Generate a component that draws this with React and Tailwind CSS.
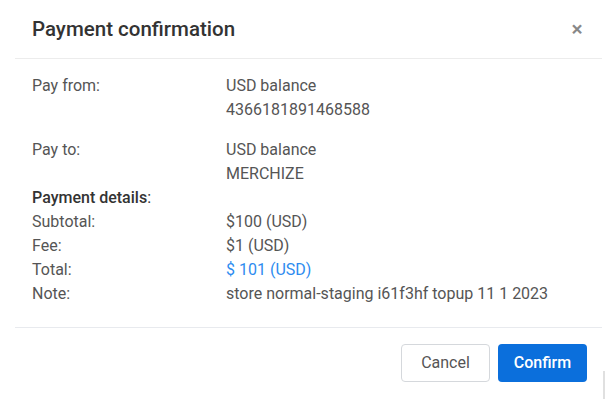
import React from "react";

const Row = ({ label, children }) => (
  <div className="flex">
    <div className="w-[194px] shrink-0">{label}</div>
    <div>{children}</div>
  </div>
);

const App = () => {
  return (
    <div
      className="w-[606px] h-[399px] bg-white text-[#555] relative overflow-hidden"
      style={{ fontFamily: "Roboto, 'Liberation Sans', sans-serif" }}
    >
      <div className="flex items-center justify-between h-[58px] pl-[32px] pr-[22px]">
        <h2 className="text-[20.5px] font-medium text-[#333]">Payment confirmation</h2>
        <button className="text-[#888] text-[21px] leading-none font-medium w-[14px] flex justify-center">×</button>
      </div>
      <div className="ml-[15px] w-[587px] h-px bg-[#ececec]" />

      <div className="pl-[32px] pt-[15px] text-[16px] leading-[24px]">
        <Row label="Pay from:">
          <div>USD balance</div>
          <div>4366181891468588</div>
        </Row>
        <div className="h-[16px]" />
        <Row label="Pay to:">
          <div>USD balance</div>
          <div>MERCHIZE</div>
        </Row>
        <div className="font-medium text-[#333]">
          Payment details<span className="font-normal">:</span>
        </div>
        <Row label="Subtotal:">$100 (USD)</Row>
        <Row label="Fee:">$1 (USD)</Row>
        <Row label="Total:">
          <span className="text-[#2d8cf0]">$ 101 (USD)</span>
        </Row>
        <Row label="Note:">store normal-staging i61f3hf topup 11 1 2023</Row>
      </div>

      <div className="ml-[15px] mt-[21px] w-[587px] h-px bg-[#e8eaee]" />

      <div className="flex justify-end gap-[8px] pr-[19px] pt-[16px]">
        <button className="w-[89px] h-[38px] rounded-[4px] border border-[#d5d8dc] bg-white text-[16px] text-[#555]">
          Cancel
        </button>
        <button className="w-[89px] h-[38px] rounded-[4px] bg-[#0b6fdc] text-[16px] font-medium text-white">
          Confirm
        </button>
      </div>
      <div className="absolute right-[1px] bottom-0 w-[2px] h-[28px] bg-[#e0e0e0]" />
    </div>
  );
};

export default App;
